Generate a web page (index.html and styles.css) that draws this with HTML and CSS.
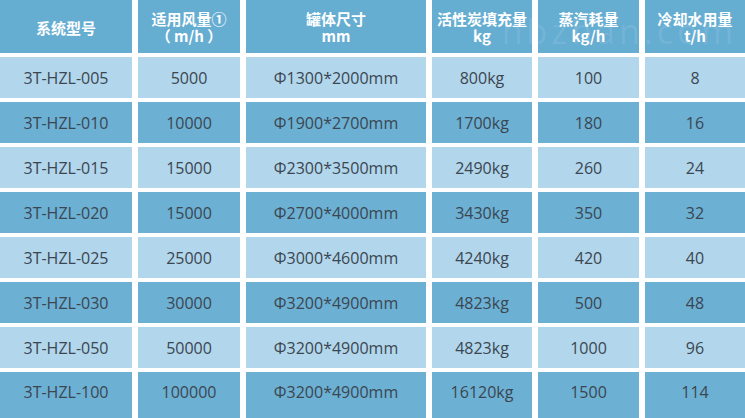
FILE: index.html
```html
<!DOCTYPE html>
<html lang="zh">
<head>
<meta charset="utf-8">
<title>活性炭吸附脱附设备参数</title>
<link rel="stylesheet" href="styles.css">
</head>
<body>
<div class="sheet">
  <div class="grid">
    <div class="hd">系统型号</div>
    <div class="hd">适用风量①<br>（ m/h ）</div>
    <div class="hd">罐体尺寸<br>mm</div>
    <div class="hd">活性炭填充量<br>kg</div>
    <div class="hd">蒸汽耗量<br>kg/h</div>
    <div class="hd">冷却水用量<br>t/h</div>

    <div class="c lt">3T-HZL-005</div><div class="c lt">5000</div><div class="c lt">Φ1300*2000mm</div><div class="c lt">800kg</div><div class="c lt">100</div><div class="c lt">8</div>
    <div class="c dk">3T-HZL-010</div><div class="c dk">10000</div><div class="c dk">Φ1900*2700mm</div><div class="c dk">1700kg</div><div class="c dk">180</div><div class="c dk">16</div>
    <div class="c lt">3T-HZL-015</div><div class="c lt">15000</div><div class="c lt">Φ2300*3500mm</div><div class="c lt">2490kg</div><div class="c lt">260</div><div class="c lt">24</div>
    <div class="c dk">3T-HZL-020</div><div class="c dk">15000</div><div class="c dk">Φ2700*4000mm</div><div class="c dk">3430kg</div><div class="c dk">350</div><div class="c dk">32</div>
    <div class="c lt">3T-HZL-025</div><div class="c lt">25000</div><div class="c lt">Φ3000*4600mm</div><div class="c lt">4240kg</div><div class="c lt">420</div><div class="c lt">40</div>
    <div class="c dk">3T-HZL-030</div><div class="c dk">30000</div><div class="c dk">Φ3200*4900mm</div><div class="c dk">4823kg</div><div class="c dk">500</div><div class="c dk">48</div>
    <div class="c lt">3T-HZL-050</div><div class="c lt">50000</div><div class="c lt">Φ3200*4900mm</div><div class="c lt">4823kg</div><div class="c lt">1000</div><div class="c lt">96</div>
    <div class="c dk last">3T-HZL-100</div><div class="c dk last">100000</div><div class="c dk last">Φ3200*4900mm</div><div class="c dk last">16120kg</div><div class="c dk last">1500</div><div class="c dk last">114</div>
  </div>
  <div class="mark">hbzhan.com</div>
</div>
</body>
</html>
```

FILE: styles.css
```css
html, body {
  margin: 0;
  padding: 0;
  background: #ffffff;
}
.sheet {
  position: relative;
  width: 745px;
  height: 418px;
  overflow: hidden;
}
.grid {
  display: grid;
  grid-template-columns: 132px 102px 180px 100px 101px 1fr;
  grid-template-rows: 53px repeat(7, 41px) 46px;
  column-gap: 6px;
  row-gap: 4px;
}
.hd {
  background: #66add2;
  color: #ffffff;
  font-family: "Noto Sans CJK SC", "Open Sans", sans-serif;
  font-weight: 700;
  font-size: 15px;
  line-height: 17px;
  display: flex;
  align-items: center;
  justify-content: center;
  text-align: center;
  padding-top: 1px;
}
.c {
  font-family: "Open Sans", "Noto Sans CJK SC", sans-serif;
  font-size: 16px;
  color: #3b4650;
  display: flex;
  align-items: center;
  justify-content: center;
}
.c.last {
  align-items: flex-start;
  padding-top: 9px;
}
.lt {
  background: #b2d6ec;
}
.dk {
  background: #6cb0d4;
}
.mark {
  position: absolute;
  right: 8px;
  top: 8px;
  font-family: "Open Sans", sans-serif;
  font-size: 34px;
  letter-spacing: 4px;
  color: rgba(255, 255, 255, 0.1);
  pointer-events: none;
}
```
